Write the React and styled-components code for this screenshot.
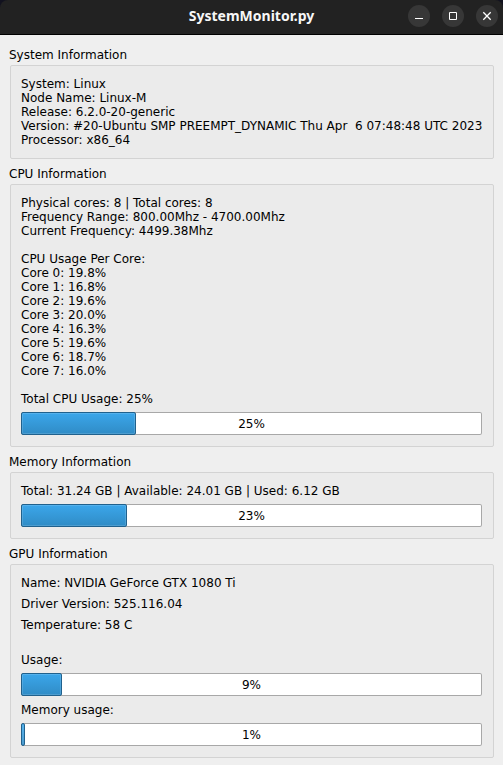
import React, { useId } from "react";
import styled, { createGlobalStyle } from "styled-components";

const GlobalStyle = createGlobalStyle`
  *, *::before, *::after { box-sizing: border-box; }
  body {
    margin: 0;
    background: #efefef;
    color: #000;
    font: 12px/14px "DejaVu Sans", Verdana, sans-serif;
  }
`;

const Window = styled.div`
  min-height: 100vh;
  background: #efefef;
`;

const TitleBarBackdrop = styled.div`
  background: #12121f;
`;

const TitleBar = styled.header`
  display: grid;
  grid-template-columns: 1fr auto 1fr;
  align-items: center;
  height: 35px;
  padding: 0 5px 2px;
  background: #222222;
  border-bottom: 1px solid #000;
  border-radius: 8px 8px 0 0;
`;

const Title = styled.h1`
  grid-column: 2;
  margin: 0;
  color: #f7f7f7;
  font: 700 14px/20px "Noto Sans", "Open Sans", sans-serif;
`;

const WindowButtons = styled.div`
  display: flex;
  justify-content: flex-end;
  gap: 12px;
`;

const WindowButton = styled.button`
  display: block;
  width: 22px;
  height: 22px;
  padding: 0;
  border: 0;
  border-radius: 50%;
  background: #373737;
  color: #fff;

  svg {
    display: block;
    fill: none;
    stroke: currentColor;
  }
`;

const Content = styled.main`
  display: flex;
  flex-direction: column;
  gap: 8px;
  padding: 13px 9px 7px;
`;

const Group = styled.section`
  display: flex;
  flex-direction: column;
  gap: 3px;
`;

const GroupTitle = styled.h2`
  margin: 0;
  font: inherit;
`;

const Panel = styled.div`
  display: flex;
  flex-direction: column;
  gap: ${(p) => p.$gap || 0}px;
  margin-left: 1px;
  padding: 11px 11px 11px 10px;
  background: #ebebeb;
  border: 1px solid #d3d3d3;
  border-radius: 2px;
`;

const Text = styled.p`
  margin: 0;
  white-space: pre;
`;

const MeterBlock = styled.div`
  display: flex;
  flex-direction: column;
  gap: 6px;
`;

const Track = styled.div`
  display: grid;
  height: 23px;
  background: #fff;
  border-radius: 2px;
  box-shadow: inset 0 0 0 1px #a8a8a8;
`;

const Fill = styled.div`
  grid-area: 1 / 1;
  background: linear-gradient(#3ba6ea, #308cc6);
  border: 1px solid #20618d;
  border-radius: 2px;
  box-shadow: inset 0 0 0 1px rgba(255, 255, 255, 0.14);
`;

const Value = styled.span`
  grid-area: 1 / 1;
  place-self: center;
`;

function Meter({ label, value }) {
  const id = useId();
  return (
    <MeterBlock>
      <Text id={id}>{label}</Text>
      <Track
        role="progressbar"
        aria-labelledby={id}
        aria-valuemin={0}
        aria-valuemax={100}
        aria-valuenow={value}
      >
        <Fill style={{ width: `round(down, ${value}%, 1px)` }} />
        <Value>{value}%</Value>
      </Track>
    </MeterBlock>
  );
}

function InfoGroup({ title, gap, children }) {
  return (
    <Group>
      <GroupTitle>{title}</GroupTitle>
      <Panel $gap={gap}>{children}</Panel>
    </Group>
  );
}

const systemInfo = [
  "System: Linux",
  "Node Name: Linux-M",
  "Release: 6.2.0-20-generic",
  "Version: #20-Ubuntu SMP PREEMPT_DYNAMIC Thu Apr  6 07:48:48 UTC 2023",
  "Processor: x86_64",
];

const cores = [19.8, 16.8, 19.6, 20.0, 16.3, 19.6, 18.7, 16.0];

const cpuInfo = [
  "Physical cores: 8 | Total cores: 8",
  "Frequency Range: 800.00Mhz - 4700.00Mhz",
  "Current Frequency: 4499.38Mhz",
  "",
  "CPU Usage Per Core:",
  ...cores.map((usage, i) => `Core ${i}: ${usage.toFixed(1)}%`),
  "\n",
];

export default function App() {
  return (
    <Window>
      <GlobalStyle />
      <TitleBarBackdrop>
        <TitleBar>
          <Title>SystemMonitor.py</Title>
          <WindowButtons>
            <WindowButton type="button" aria-label="Minimize">
              <svg width="22" height="22" viewBox="0 0 22 22">
                <path d="M7 13.5h8" />
              </svg>
            </WindowButton>
            <WindowButton type="button" aria-label="Maximize">
              <svg width="22" height="22" viewBox="0 0 22 22">
                <path d="M7.5 7.5h7v7h-7z" />
              </svg>
            </WindowButton>
            <WindowButton type="button" aria-label="Close">
              <svg width="22" height="22" viewBox="0 0 22 22">
                <path d="M7.3 7.3l7.4 7.4M14.7 7.3l-7.4 7.4" strokeWidth="1.3" />
              </svg>
            </WindowButton>
          </WindowButtons>
        </TitleBar>
      </TitleBarBackdrop>
      <Content>
        <InfoGroup title="System Information">
          <Text>{systemInfo.join("\n")}</Text>
        </InfoGroup>
        <InfoGroup title="CPU Information">
          <Text>{cpuInfo.join("\n")}</Text>
          <Meter label="Total CPU Usage: 25%" value={25} />
        </InfoGroup>
        <InfoGroup title="Memory Information">
          <Meter label="Total: 31.24 GB | Available: 24.01 GB | Used: 6.12 GB" value={23} />
        </InfoGroup>
        <InfoGroup title="GPU Information" gap={7}>
          <Text>Name: NVIDIA GeForce GTX 1080 Ti</Text>
          <Text>Driver Version: 525.116.04</Text>
          <Text>{"Temperature: 58 C\n\n"}</Text>
          <Meter label="Usage:" value={9} />
          <Meter label="Memory usage:" value={1} />
        </InfoGroup>
      </Content>
    </Window>
  );
}
